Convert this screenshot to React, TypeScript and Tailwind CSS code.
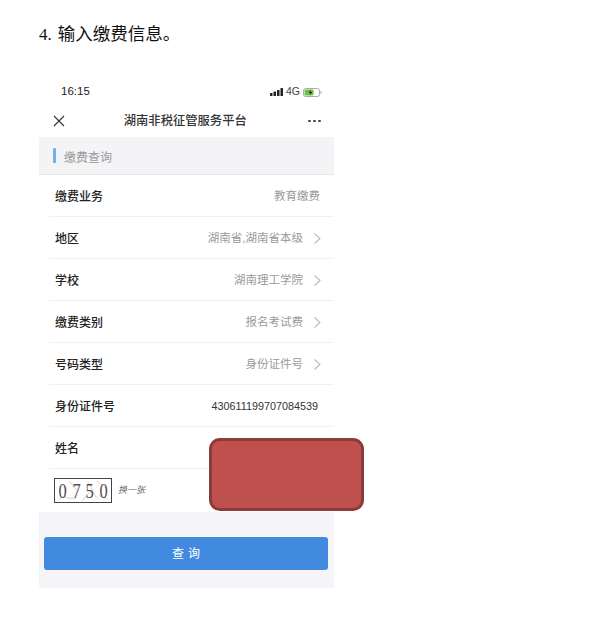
const cjk = "font-['Liberation_Sans','Noto_Sans_CJK_SC',sans-serif]";

const rows = [
  { label: '缴费业务', value: '教育缴费', arrow: false },
  { label: '地区', value: '湖南省,湖南省本级', arrow: true },
  { label: '学校', value: '湖南理工学院', arrow: true },
  { label: '缴费类别', value: '报名考试费', arrow: true },
  { label: '号码类型', value: '身份证件号', arrow: true },
];

function Row({ label, value, arrow }: { label: string; value: string; arrow: boolean }) {
  return (
    <div className="ml-[10px] flex h-[42px] items-center justify-between border-b border-[#f1f1f3] pl-[6px] pr-[14px] pt-[2px]">
      <span className="text-[12px] font-medium text-[#222]">{label}</span>
      <div className="flex items-center">
        <span className="text-[11.5px] text-[#9a9a9a]">{value}</span>
        {arrow && (
          <svg className="ml-[10px] -mr-[1px]" width="8" height="13" viewBox="0 0 8 13" fill="none" stroke="#bbbbbb" strokeWidth="1.1">
            <path d="M1.5 1.5 L7 6.5 L1.5 11.5" />
          </svg>
        )}
      </div>
    </div>
  );
}

function Captcha() {
  return (
    <div className="relative flex h-[25px] w-[58px] items-center justify-around border border-[#444] bg-white px-[1px] font-['Liberation_Serif',serif] text-[22px] leading-none text-[#5a4a50]">
      <svg className="absolute inset-0 h-full w-full" viewBox="0 0 58 25" fill="none" stroke="#9a9a9a" strokeWidth="0.5">
        <path d="M3 22 C10 16 14 24 22 20 M14 2 L24 14 M34 3 C40 8 38 16 46 22 M44 2 L54 10 M28 24 L38 12 M6 6 L12 12 M46 18 L56 22" />
      </svg>
      <span className="relative scale-x-75">0</span>
      <span className="relative scale-x-75">7</span>
      <span className="relative scale-x-75">5</span>
      <span className="relative scale-x-75">0</span>
    </div>
  );
}

export default function App() {
  return (
    <div className={`relative h-[624px] w-[590px] overflow-hidden bg-white pl-[39px] pt-[23px] ${cjk}`}>
      <h1 className="pt-[1px] font-['Liberation_Serif','Noto_Sans_CJK_SC',serif] text-[17px] leading-[21px] font-normal text-[#111]">
        4.<span className="ml-[6px] text-[17.5px]">输入缴费信息。</span>
      </h1>

      {/* Phone screenshot */}
      <div className="mt-[30px] w-[295px]">
        {/* Status bar */}
        <div className="flex h-[32px] items-center justify-between pl-[22px] pr-[12px] pt-[2px]">
          <span className="text-[11.5px] font-medium text-[#222]">16:15</span>
          <div className="flex items-center gap-[2px]">
            <svg width="14" height="8" viewBox="0 0 14 8" fill="#222">
              <rect x="0" y="5" width="2.5" height="3" rx="0.5" />
              <rect x="3.5" y="3.5" width="2.5" height="4.5" rx="0.5" />
              <rect x="7" y="2" width="2.5" height="6" rx="0.5" />
              <rect x="10.5" y="0" width="2.5" height="8" rx="0.5" />
            </svg>
            <span className="text-[10.5px] text-[#444]">4G</span>
            <svg className="ml-[1px]" width="19" height="9" viewBox="0 0 19 9" fill="none">
              <rect x="0.5" y="0.5" width="16" height="8" rx="2" stroke="#aaa" />
              <rect x="1.5" y="1.5" width="9" height="6" rx="1" fill="#6cc24a" />
              <path d="M8 1.5 L5.5 5 H7.5 L6.5 7.5 L9.5 4 H7.5 Z" fill="#222" />
              <rect x="17.5" y="3" width="1" height="3" rx="0.5" fill="#aaa" />
            </svg>
          </div>
        </div>

        {/* Nav bar */}
        <div className="flex h-[30px] items-center justify-between pb-[2px] pl-[14px] pr-[13px]">
          <svg width="12" height="12" viewBox="0 0 12 12" fill="none" stroke="#333" strokeWidth="1.1">
            <path d="M1 1 L11 11 M11 1 L1 11" />
          </svg>
          <span className="mr-[3px] text-[12.3px] font-medium text-[#333]">湖南非税征管服务平台</span>
          <div className="flex gap-[2.5px]">
            <span className="h-[2.5px] w-[2.5px] rounded-full bg-[#444]" />
            <span className="h-[2.5px] w-[2.5px] rounded-full bg-[#444]" />
            <span className="h-[2.5px] w-[2.5px] rounded-full bg-[#444]" />
          </div>
        </div>

        {/* Section title */}
        <div className="flex h-[38px] items-center border-b border-[#e8e8ea] bg-[#f4f4f6] pl-[14px]">
          <span className="h-[15px] w-[3px] rounded-[1px] bg-[#6cb2ee]" />
          <span className="ml-[8px] pt-[4px] text-[12px] text-[#9a9a9a]">缴费查询</span>
        </div>

        {rows.map((row) => (
          <Row key={row.label} {...row} />
        ))}

        <div className="ml-[10px] flex h-[42px] items-center justify-between border-b border-[#f1f1f3] pl-[6px] pr-[16px] pt-[2px]">
          <span className="text-[12px] font-medium text-[#222]">身份证件号</span>
          <span className="text-[10.8px] text-[#333]">430611199707084539</span>
        </div>

        <div className="ml-[10px] flex h-[42px] items-center border-b border-[#f1f1f3] pl-[6px] pt-[2px]">
          <span className="text-[12px] font-medium text-[#222]">姓名</span>
        </div>

        <div className="flex h-[43px] items-center pl-[15px]">
          <Captcha />
          <span className="ml-[6px] text-[9px] italic text-[#666]">换一张</span>
        </div>

        {/* Submit */}
        <div className="h-[76px] bg-[#f4f4f9] pl-[5px] pr-[6px] pt-[25px]">
          <button className="h-[33px] w-full rounded-[3px] bg-[#428ae0] pl-[4px] text-[12px] tracking-[4px] text-white">
            查询
          </button>
        </div>
      </div>

      {/* Redaction box */}
      <div className="absolute left-[209px] top-[438px] h-[73px] w-[155px] rounded-[11px] border-[3px] border-[#8c3a3a] bg-[#c0504d]" />
    </div>
  );
}
